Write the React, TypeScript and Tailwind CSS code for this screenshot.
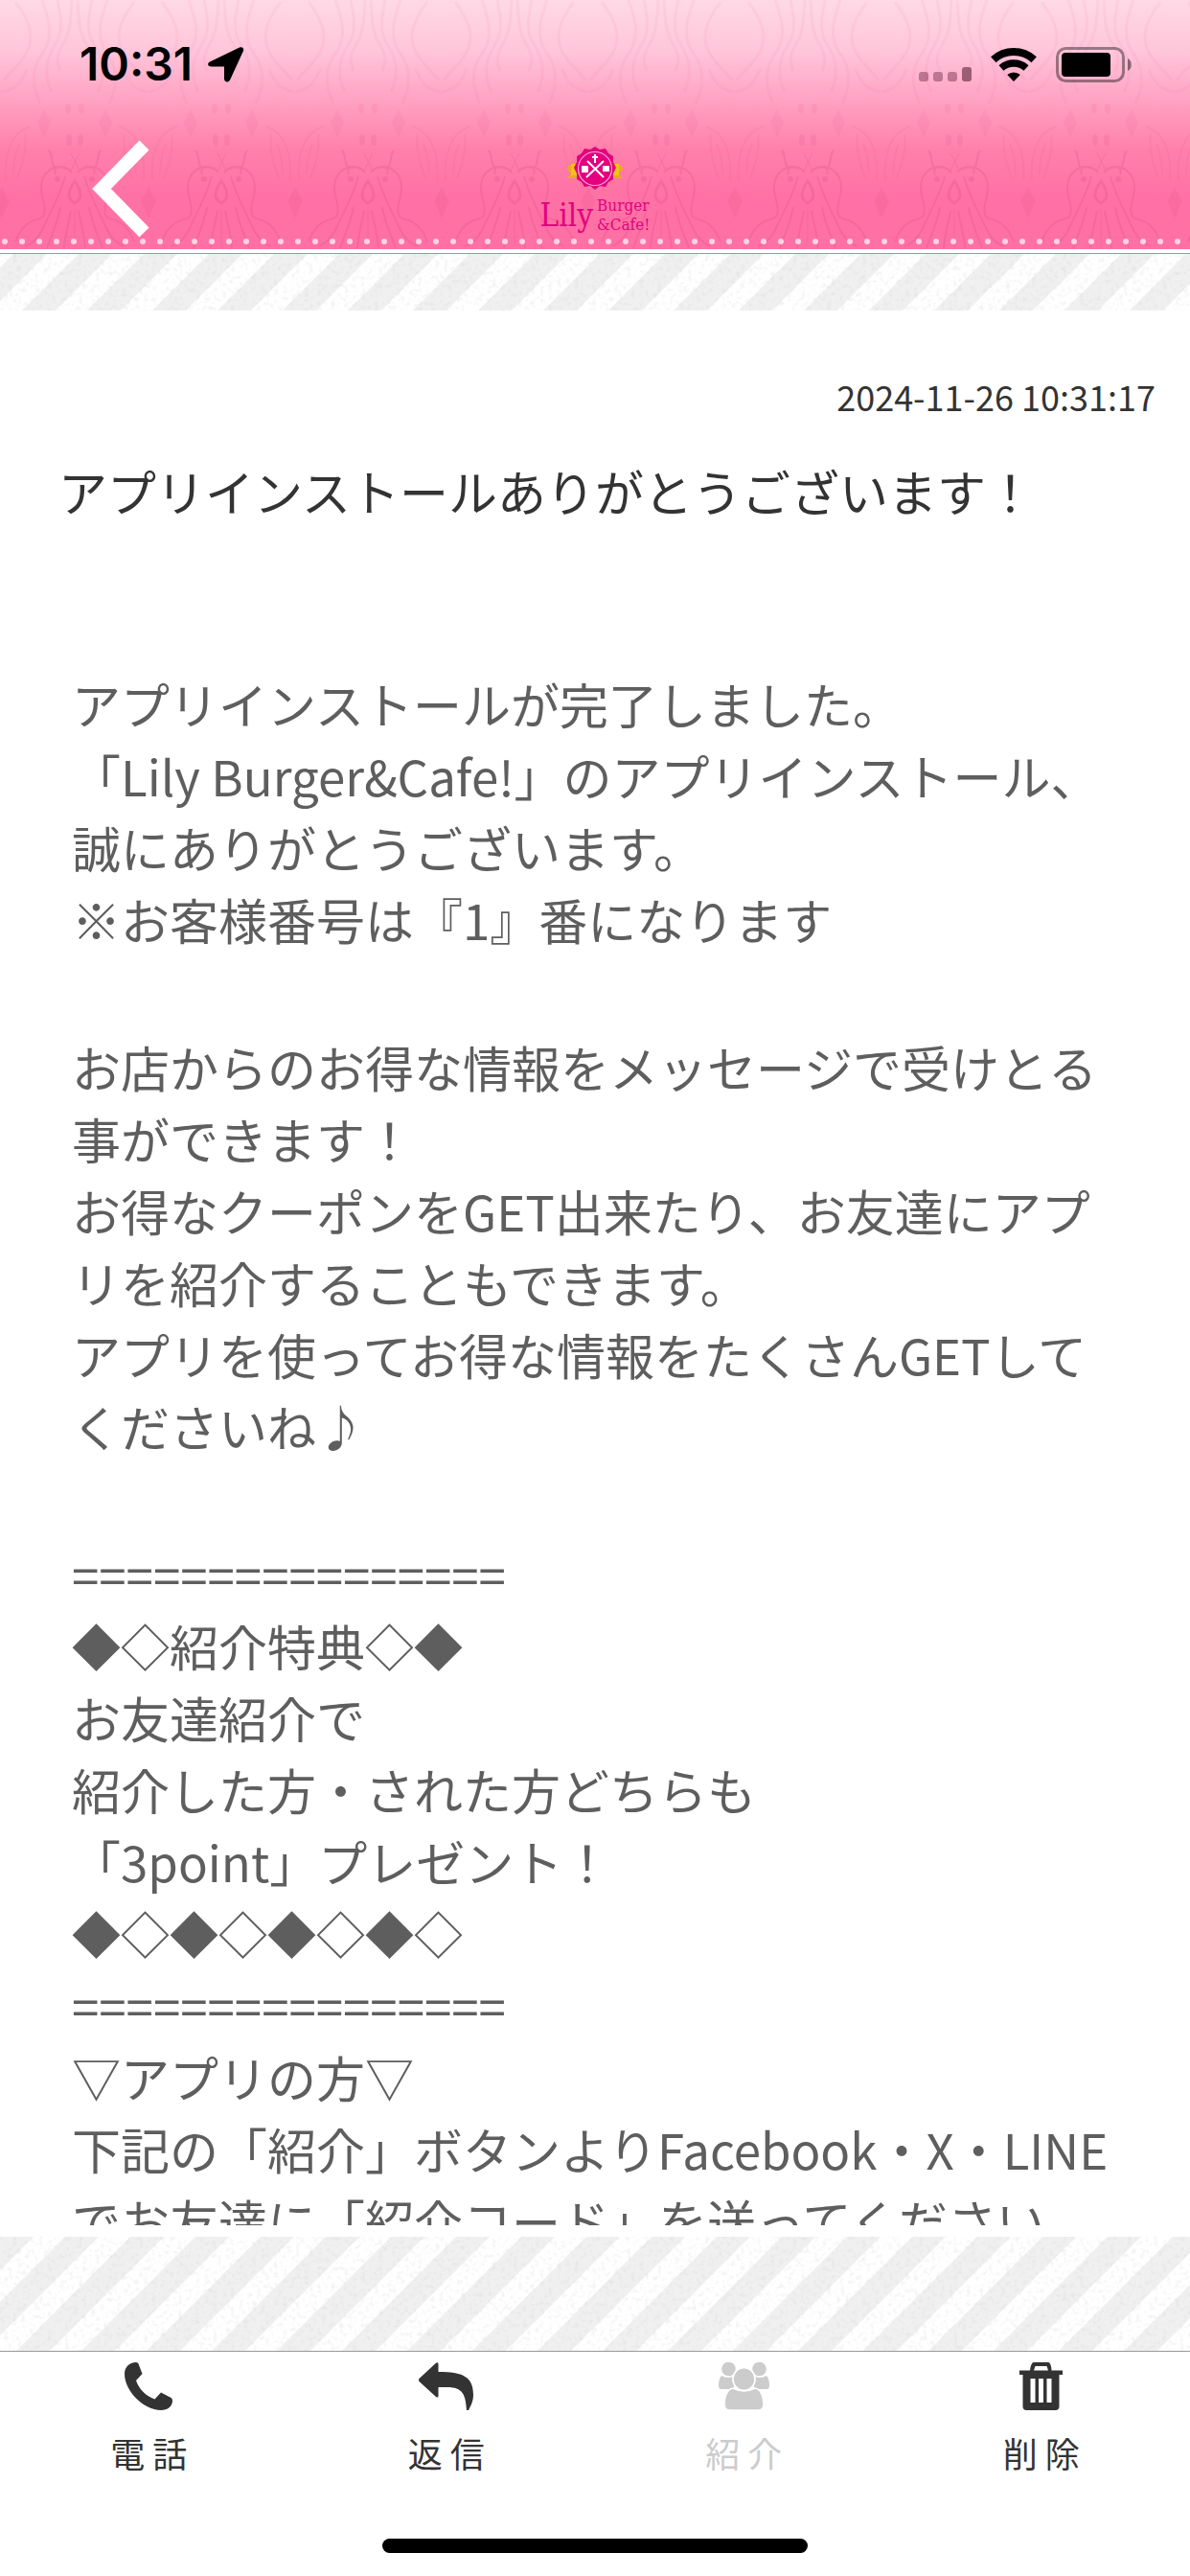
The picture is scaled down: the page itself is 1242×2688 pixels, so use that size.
import { useId } from "react";
import type { ReactNode } from "react";

const MESSAGE_BLOCKS: readonly string[][] = [
  [
    "アプリインストールが完了しました。",
    "「Lily Burger&Cafe!」のアプリインストール、",
    "誠にありがとうございます。",
    "※お客様番号は『1』番になります",
  ],
  [
    "お店からのお得な情報をメッセージで受けとる",
    "事ができます！",
    "お得なクーポンをGET出来たり、お友達にアプ",
    "リを紹介することもできます。",
    "アプリを使ってお得な情報をたくさんGETして",
    "くださいね♪",
  ],
  [
    "================",
    "◆◇紹介特典◇◆",
    "お友達紹介で",
    "紹介した方・された方どちらも",
    "「3point」プレゼント！",
    "◆◇◆◇◆◇◆◇",
    "================",
    "▽アプリの方▽",
    "下記の「紹介」ボタンよりFacebook・X・LINE",
    "でお友達に「紹介コード」を送ってください。",
  ],
];

function HeaderArt() {
  const id = useId();
  return (
    <svg className="absolute inset-0 size-full" aria-hidden>
      <defs>
        <linearGradient id={`${id}-fade`} x1="0" y1="0" x2="0" y2="1">
          <stop offset="0" stopColor="#ffd9e6" />
          <stop offset="0.2" stopColor="#ffc6da" />
          <stop offset="0.38" stopColor="#ffa6c5" />
          <stop offset="0.6" stopColor="#ff80ab" />
          <stop offset="0.78" stopColor="#ff72a5" />
          <stop offset="1" stopColor="#ff70a4" />
        </linearGradient>
        <g id={`${id}-half`} fill="none" stroke="#d94d86" strokeWidth="2">
          <path d="M20 182c4-8-8-12-17-2M8 176c14-6 27 4 27 20 0 12-6 18-3 28 1 5 9 4 15 8 8 5 12 12 15 20" />
          <path d="M10 184c6 22 15 36 22 52 4 9 10 18 20 21" />
          <path d="M27 157c-5 6-1 10-6 18M4 220c2 12 6 24 7 39M15 216c2 14 8 26 14 43" />
          <path d="M72 188c2-24-4-50-26-56M52 140c-2 16 2 30 8 46M58 150c4 10 6 20 6 32" opacity="0.4" />
          <g opacity="0.25" strokeWidth="3">
            <path d="M3 0c1 20 2 34 8 44s10 18 4 30M18 0c-4 18-6 34 2 46s14 30 4 50M34 0C26 22 22 40 34 56s10 36 2 52" />
            <path d="M62 2c-12 16-20 32-14 48s18 22 26 34M76 96c-14-2-22-12-26-24" />
          </g>
          <circle cx="18" cy="187" r="2" fill="#d94d86" />
          <ellipse cx="6" cy="146" rx="2" ry="5" fill="#d94d86" opacity="0.6" />
          <ellipse cx="7" cy="113" rx="2" ry="4" fill="#d94d86" opacity="0.4" />
          <path d="M32 116l6 12-6 13-6-13z" fill="#d94d86" opacity="0.35" />
        </g>
        <pattern id={`${id}-damask`} x="2" width="153" height="260" patternUnits="userSpaceOnUse">
          <g opacity="0.28">
            <use href={`#${id}-half`} x="76" />
            <use href={`#${id}-half`} transform="translate(76 0) scale(-1 1)" />
            <path d="M76 189c-8 12-8 18 0 23 8-5 8-11 0-23z" fill="none" stroke="#d94d86" strokeWidth="3" />
            <path d="M72 160l9 18M81 160l-9 18M76 218v40" fill="none" stroke="#d94d86" />
            <path d="M0 195l8 15-8 18zM153 195l-8 15 8 18z" fill="#d94d86" opacity="0.6" />
          </g>
        </pattern>
        <pattern id={`${id}-dots`} x="-4" y="248" width="18" height="18" patternUnits="userSpaceOnUse">
          <circle cx="9" cy="4" r="3" fill="#ffd3e1" />
        </pattern>
      </defs>
      <rect width="100%" height="100%" fill={`url(#${id}-fade)`} />
      <rect width="100%" height="100%" fill={`url(#${id}-damask)`} />
      <rect y="248" width="100%" height="8" fill={`url(#${id}-dots)`} />
    </svg>
  );
}

function Stripes({ className, shift }: { className: string; shift: number }) {
  const id = useId();
  return (
    <svg className={className} aria-hidden>
      <defs>
        <pattern id={`${id}-p`} x={shift} width="68" height="68" patternUnits="userSpaceOnUse">
          <rect width="68" height="68" fill="#ffffff" />
          <path d="M0 0H35L0 35zM68 0h35L0 103V68z" fill="#f0f0f0" />
        </pattern>
        <filter id={`${id}-n`} x="0" y="0" width="100%" height="100%">
          <feTurbulence type="fractalNoise" baseFrequency="0.22" numOctaves="2" seed="4" />
          <feColorMatrix values="0 0 0 0 0.6  0 0 0 0 0.6  0 0 0 0 0.6  1.6 0 0 0 -0.78" />
        </filter>
      </defs>
      <rect width="100%" height="100%" fill={`url(#${id}-p)`} />
      <rect width="100%" height="100%" filter={`url(#${id}-n)`} opacity="0.45" />
    </svg>
  );
}

function StatusBar() {
  return (
    <div className="flex h-[134px] items-center justify-between pr-[60px] pl-[83px]">
      <div className="flex items-center gap-4 font-['Inter',sans-serif] text-5xl leading-none font-semibold text-black">
        <span>10:31</span>
        <svg className="h-[37px] w-[38px]" viewBox="0 0 38 37" aria-label="位置情報">
          <path d="M2 15.500L33 .6c3-1.200 5 1 3.800 3.800L23 34.500c-1.400 3-6 2.300-6-1.200V20.500H3.500C-.3 20.500-1 17 2 15.500z" />
        </svg>
      </div>
      <div className="flex items-end gap-5">
        <svg className="h-[37px] w-[55px]" viewBox="0 0 55 37" aria-label="圏外">
          <g fill="#4a0a24" opacity="0.36">
            <rect y="26" width="10" height="10" rx="3" />
            <rect x="15" y="26" width="10" height="10" rx="3" />
            <rect x="30" y="26" width="10" height="10" rx="3" />
          </g>
          <rect x="45" y="21" width="10" height="15" rx="3" fill="#5a2338" opacity="0.6" />
        </svg>
        <svg className="h-[37px] w-12" viewBox="0 0 48 37" aria-label="Wi-Fi">
          <g fill="none" stroke="#000">
            <path d="M2.800 13.200a31.500 31.500 0 0 1 42.400 0" strokeWidth="8" />
            <path d="M11 22a19.500 19.500 0 0 1 26 0" strokeWidth="7.500" />
          </g>
          <path d="M24 36l-6.800-7a10.500 10.500 0 0 1 13.600 0z" />
        </svg>
        <svg className="h-[37px] w-20" viewBox="0 0 80 37" aria-label="バッテリー">
          <rect x="1.500" y="1.500" width="69" height="34" rx="9" fill="none" stroke="#000" strokeWidth="3" opacity="0.4" />
          <rect x="6" y="6" width="51" height="25" rx="4" />
          <path d="M75 12c5 2 5 11 0 13z" opacity="0.45" />
        </svg>
      </div>
    </div>
  );
}

function Logo() {
  return (
    <div className="flex flex-col items-center gap-1 text-[#e4007f]">
      <svg className="h-12 w-[60px]" viewBox="0 0 60 48" aria-hidden>
        <path d="M2 21h12v13H1l4-5-4-4zM58 21H46v13h13l-4-5 4-4z" fill="#eda91f" />
        <path d="M5 19h8v12H5zM47 19h8v12h-8z" fill="#f0c419" />
        <path
          d="M30 1l5 3 6-1 3 5 5 3v6l3 6-3 6v6l-5 3-3 5-6-1-5 4-5-4-6 1-3-5-5-3v-6l-3-6 3-6v-6l5-3 3-5 6 1z"
          fill="#e4007f"
        />
        <circle cx="30" cy="24" r="17.500" fill="none" stroke="#f7a8cf" strokeWidth="1.200" />
        <g fill="none" stroke="#fff" strokeWidth="2">
          <path d="M22 16l17 17M39 16L21 33M30 9v9M27 12h6" />
        </g>
        <path d="M16 21h7v7h-7zM38 21h7v6h-7z" fill="#fff" />
      </svg>
      <div className="flex items-center gap-1 font-['DejaVu_Serif_Condensed','DejaVu_Serif',serif] leading-none">
        <span className="text-[33px]">Lily</span>
        <span className="flex flex-col text-[17px] leading-5">
          <span>Burger</span>
          <span>&amp;Cafe!</span>
        </span>
      </div>
    </div>
  );
}

function Header() {
  return (
    <header className="relative h-[260px] shrink-0">
      <HeaderArt />
      <div className="relative">
        <StatusBar />
        <div className="grid grid-cols-3 items-start">
          <button type="button" aria-label="戻る" className="justify-self-start pt-3 pl-24">
            <svg className="h-[102px] w-[61px]" viewBox="0 0 61 102" aria-hidden>
              <path d="M54.500 5.500L10 51l44.500 45.500" fill="none" stroke="#fff" strokeWidth="14" />
            </svg>
          </button>
          <div className="justify-self-center pt-[18px]">
            <Logo />
          </div>
        </div>
      </div>
    </header>
  );
}

function PhoneIcon() {
  return (
    <svg className="h-[50px] w-[50px]" viewBox="0 0 50 50" fill="currentColor" aria-hidden>
      <path d="M12 0q2 0 2.500 1.500l4 10.500-6.500 7c3 9 10 16 19.500 19.500l6.500-7L48.500 37q1.500 1 1.500 3c0 6-5 10-12 10C20 50 0 30 0 12 0 5 5 0 12 0z" />
    </svg>
  );
}

function ReplyIcon() {
  return (
    <svg className="h-[50px] w-[57px]" viewBox="0 0 57 50" fill="currentColor" aria-hidden>
      <path d="M.5 17L18 .8q2.500-1.500 2.500 1.200v8C46 10 57 15 57 34c0 7-3 12-5 16h-2c-1-16-4-24-20-24h-9.500v9q0 2.500-2.500 1L.5 20q-1-1.500 0-3z" />
    </svg>
  );
}

function PeopleIcon() {
  return (
    <svg className="h-[50px] w-[53px]" viewBox="0 0 53 50" fill="currentColor" aria-hidden>
      <ellipse cx="10.500" cy="7" rx="7.300" ry="7.300" />
      <ellipse cx="42.500" cy="7" rx="7.300" ry="7.300" />
      <path d="M3 14q8 4 13 0v14H3q-3 0-3-4c0-4 1-8 3-10zM50 14q-8 4-13 0v14h13q3 0 3-4c0-4-1-8-3-10z" />
      <path
        d="M15 27q11.500 6 23 0c6 1 9 9 9 17q0 6-6 6H12q-6 0-6-6c0-8 3-16 9-17z"
        stroke="#fff"
        strokeWidth="1.500"
      />
      <ellipse cx="26.500" cy="17.500" rx="11.500" ry="12" stroke="#fff" strokeWidth="1.800" />
    </svg>
  );
}

function TrashIcon() {
  return (
    <svg className="h-[50px] w-[45px]" viewBox="0 0 45 50" fill="currentColor" aria-hidden>
      <path
        fillRule="evenodd"
        d="M15 0h15q3 0 3.500 8.500H45V13h-3.500v33q0 4-4 4h-30q-4 0-4-4V13H0V8.500h11Q12 0 15 0zm1.500 4L15 8.500h15L28.500 4zM11.500 17v25h5V17zm8.500 0v25h5V17zm8.500 0v25h5V17z"
      />
    </svg>
  );
}

function TabButton({ icon, label, disabled }: { icon: ReactNode; label: string; disabled?: boolean }) {
  return (
    <button
      type="button"
      disabled={disabled}
      className="flex flex-1 flex-col items-center gap-6 pt-[11px] text-4xl text-[#333] disabled:text-[#ccc]"
    >
      {icon}
      <span>{label}</span>
    </button>
  );
}

export default function App() {
  return (
    <div className="flex h-screen flex-col overflow-hidden bg-white font-['Noto_Sans_CJK_JP',sans-serif] text-[#333]">
      <Header />
      <div className="h-[5px] shrink-0 border-b border-[#999]" />
      <Stripes className="h-[59px] w-full shrink-0" shift={14} />

      <main className="flex min-h-0 flex-1 flex-col pt-[63px] pb-3">
        <time className="pr-9 text-right text-4xl leading-[52px]">2024-11-26 10:31:17</time>
        <h1 className="mt-9 px-[61px] text-[51px] leading-[75px]">アプリインストールありがとうございます！</h1>
        <article className="mt-[147px] flex min-h-0 flex-1 flex-col gap-[79px] overflow-hidden px-[75px] text-[51px] leading-[75px] text-[#5e5e5e]">
          {MESSAGE_BLOCKS.map((lines) => (
            <p key={lines[0]} className="shrink-0 whitespace-pre-line">
              {lines.join("\n")}
            </p>
          ))}
        </article>
      </main>

      <Stripes className="h-[119px] w-full shrink-0" shift={0} />
      <footer className="h-[235px] shrink-0 border-t border-[#999]">
        <nav className="flex">
          <TabButton icon={<PhoneIcon />} label="電 話" />
          <TabButton icon={<ReplyIcon />} label="返 信" />
          <TabButton icon={<PeopleIcon />} label="紹 介" disabled />
          <TabButton icon={<TrashIcon />} label="削 除" />
        </nav>
        <div className="mx-auto mt-[70px] h-[15px] w-111 rounded-full bg-black" />
      </footer>
    </div>
  );
}
